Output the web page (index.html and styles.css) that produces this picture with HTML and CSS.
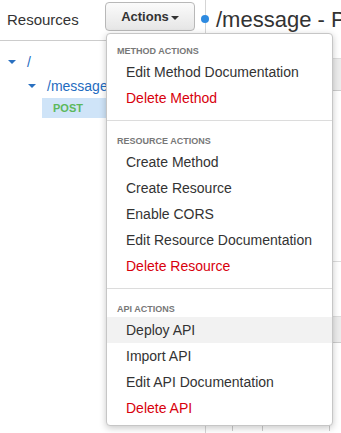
FILE: index.html
```html
<!DOCTYPE html>
<html lang="en">
<head>
  <meta charset="UTF-8">
  <meta name="viewport" content="width=device-width,initial-scale=1">
  <title>API Gateway - Resources</title>
  <link rel="stylesheet" href="styles.css">
</head>
<body>
  <div class="console">
    <aside class="sidebar">
      <div class="sidebar-head">
        <span class="sidebar-title">Resources</span>
        <div class="actions">
          <button class="actions-btn">Actions<span class="caret"></span></button>
          <!-- dropdown, open -->
          <div class="menu">
            <div class="menu-head">Method actions</div>
            <a class="menu-item">Edit Method Documentation</a>
            <a class="menu-item danger">Delete Method</a>
            <div class="menu-divider"></div>
            <div class="menu-head">Resource actions</div>
            <a class="menu-item">Create Method</a>
            <a class="menu-item">Create Resource</a>
            <a class="menu-item">Enable CORS</a>
            <a class="menu-item">Edit Resource Documentation</a>
            <a class="menu-item danger">Delete Resource</a>
            <div class="menu-divider"></div>
            <div class="menu-head">API actions</div>
            <a class="menu-item hover">Deploy API</a>
            <a class="menu-item">Import API</a>
            <a class="menu-item">Edit API Documentation</a>
            <a class="menu-item danger">Delete API</a>
          </div>
        </div>
      </div>
      <ul class="tree">
        <li class="tree-row"><span class="toggle"></span><a class="tree-link">/</a></li>
        <li class="tree-row nested"><span class="toggle"></span><a class="tree-link">/message</a></li>
        <li class="tree-method">POST</li>
      </ul>
    </aside>
    <main class="main">
      <span class="dot"></span>
      <h1 class="page-title">/message - POST - Method Execution</h1>
      <div class="exec">
        <div class="exec-head"></div>
        <div class="exec-rule"></div>
        <div class="exec-head second"></div>
      </div>
      <div class="flow">
        <div class="flow-cell narrow"></div>
        <div class="flow-cell wide"></div>
      </div>
    </main>
  </div>
</body>
</html>
```

FILE: styles.css
```css
html, body {margin: 0;padding: 0;height: 100%;overflow: hidden;background: #fff;font-family: 'Liberation Sans', Arial, Helvetica, sans-serif;color: #333;}
.console {display: flex;height: 100%;}

.sidebar {width: 205px;flex: none;border-right: 1px solid #d5d5d5;}
.sidebar-head {display: grid;grid-template-columns: 98px auto;align-items: start;height: 38px;padding: 2px 0 0 7px;border-bottom: 1px solid #ccc;}
.sidebar-title {font-size: 15px;line-height: 18px;margin-top: 9px;}
.actions {position: relative;}
.actions-btn {
  width: 90px; height: 29px; padding: 0; border: 1px solid #b8b8b8; border-radius: 4px;
  background: linear-gradient(#fbfbfb, #e6e6e6); color: #333;
  font: bold 13px 'Liberation Sans', Arial, sans-serif; cursor: pointer;
}
.caret {display: inline-block;margin-left: 2px;vertical-align: middle;border-top: 4px solid #333;border-left: 4px solid transparent;border-right: 4px solid transparent;}

.menu {
  position: absolute; top: 31px; left: 1px; z-index: 10; width: 227px; box-sizing: border-box;
  padding: 4px 0; background: #fff; border: 1px solid #c6c6c6; border-radius: 4px;
  box-shadow: 0 2px 7px rgba(0,0,0,0.22);
}
.menu-head {padding: 7px 10px 2px;font-size: 9px;line-height: 12px;font-weight: bold;text-transform: uppercase;color: #777;}
.menu-item {display: block;padding: 0 19px;font-size: 14px;line-height: 26px;color: #333;white-space: nowrap;cursor: pointer;}
.menu-item.danger {color: #d8000c;}
.menu-item.hover {background: #f2f2f2;}
.menu-divider {height: 1px;margin: 9px 0 7px;background: #dcdcdc;}

.tree {list-style: none;margin: 0;padding: 8px 0 0;font-size: 14px;}
.tree-row {display: flex;align-items: center;height: 25px;padding-left: 8px;}
.tree-row.nested {height: 24px;padding-left: 28px;}
.toggle {width: 0;height: 0;margin-right: 11px;border-top: 4px solid #2a70c0;border-left: 4px solid transparent;border-right: 4px solid transparent;}
.tree-link {color: #1f6cbf;white-space: nowrap;}
.tree-method {margin-left: 42px;padding-left: 11px;height: 20px;line-height: 20px;background: #cfe4f8;color: #5cb85c;font-size: 11px;font-weight: bold;}

.main {position: relative;flex: 1;min-width: 0;}
.page-title {margin: 0;padding: 2px 0 0 10px;font-size: 22px;line-height: 36px;font-weight: normal;color: #333;white-space: nowrap;overflow: hidden;}
.dot {position: absolute;left: -5px;top: 15px;width: 8px;height: 8px;border-radius: 50%;background: #2d8ae0;}

.exec {margin: 20px 0 0 127px;}
.exec-head {height: 31px;background: #ececec;border-top: 1px solid #ddd;border-bottom: 1px solid #ccc;}
.exec-rule {height: 170px;border-bottom: 1px solid #ddd;}
.exec-head.second {margin-top: 54px;height: 25px;}
.flow {display: flex;margin: 60px 0 0 26px;height: 28px;}
.flow-cell {border-left: 1px solid #ccc;}
.flow-cell.narrow {width: 29px;}
.flow-cell.wide {width: 66px;border-right: 1px solid #ccc;}
```
